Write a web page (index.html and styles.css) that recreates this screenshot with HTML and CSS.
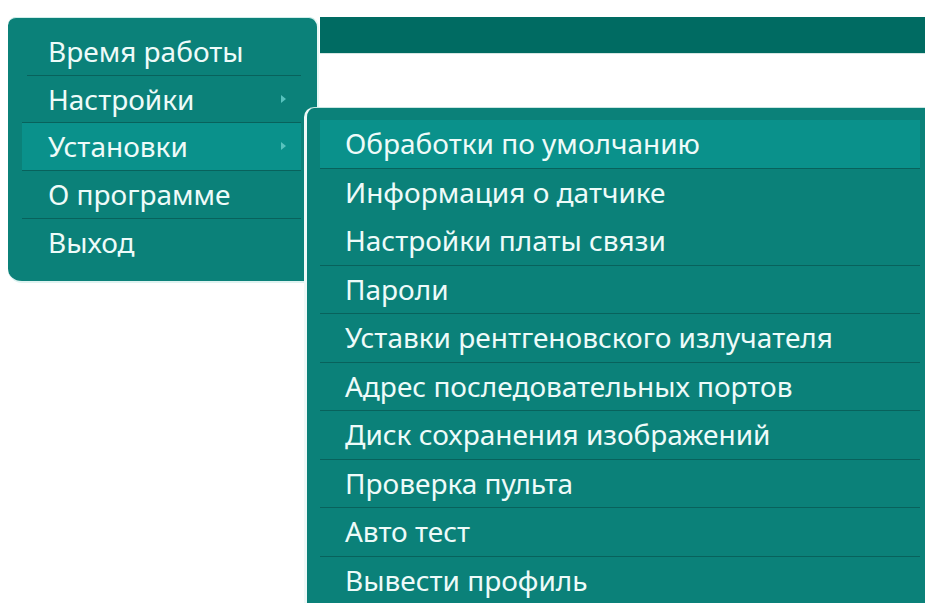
FILE: index.html
```html
<!DOCTYPE html>
<html lang="ru">
<head>
<meta charset="utf-8">
<title>Меню</title>
<link rel="stylesheet" href="styles.css">
</head>
<body>
<div class="screen">
  <div class="topbar"></div>

  <nav class="menu">
    <ul class="menu-list">
      <li class="item first">Время работы</li>
      <li class="item has-sub">Настройки<span class="arrow"></span></li>
      <li class="item has-sub active">Установки<span class="arrow"></span></li>
      <li class="item">О программе</li>
      <li class="item last">Выход</li>
    </ul>
  </nav>

  <nav class="submenu">
    <ul class="menu-list">
      <li class="item active">Обработки по умолчанию</li>
      <li class="item no-line">Информация о датчике</li>
      <li class="item">Настройки платы связи</li>
      <li class="item">Пароли</li>
      <li class="item">Уставки рентгеновского излучателя</li>
      <li class="item">Адрес последовательных портов</li>
      <li class="item">Диск сохранения изображений</li>
      <li class="item">Проверка пульта</li>
      <li class="item">Авто тест</li>
      <li class="item last">Вывести профиль</li>
    </ul>
  </nav>
</div>
</body>
</html>
```

FILE: styles.css
```css
html, body {
  margin: 0;
  padding: 0;
  background: #ffffff;
  overflow: hidden;
}

.screen {
  position: relative;
  width: 925px;
  height: 603px;
  padding-top: 17px;
  box-sizing: border-box;
  overflow: hidden;
  font-family: "Noto Sans", "Open Sans", sans-serif;
  color: #eefbf9;
}

/* dark application bar behind the menus */
.topbar {
  margin-left: 320px;
  height: 36px;
  background: #006b62;
  border-bottom: 1px solid #d5e6e3;
}

.menu-list {
  list-style: none;
  margin: 0;
  padding: 0;
}

.item {
  position: relative;
  height: 47.7px;
  line-height: 46px;
  font-size: 28px;
  padding-left: 26px;
  border-bottom: 1px solid #08625c;
  box-sizing: border-box;
  white-space: nowrap;
}

.item.active {
  background: #0a918b;
}

.item.last,
.item.no-line {
  border-bottom-color: transparent;
}

/* main popup menu */
.menu {
  position: absolute;
  left: 8px;
  top: 17px;
  width: 311px;
  height: 266px;
  background: #0b8179;
  border-top: 1px solid #cfeeea;
  border-right: 2px solid #e7f8f6;
  border-bottom: 2px solid #dff3f1;
  border-radius: 8px 10px 2px 14px;
  padding: 10px 16px 0 14px;
  box-sizing: border-box;
}

.menu .item.first {
  margin-left: 5px;
  padding-left: 21px;
}

.arrow {
  position: absolute;
  right: 15px;
  top: 19px;
  width: 0;
  height: 0;
  border-top: 4px solid transparent;
  border-bottom: 4px solid transparent;
  border-left: 5px solid #58c3be;
}

/* cascading submenu */
.submenu {
  position: absolute;
  left: 304px;
  top: 107px;
  right: 0;
  bottom: 0;
  background: #0b8179;
  border-top: 1px solid #c9e6e2;
  border-left: 3px solid #eef9f8;
  border-radius: 10px 0 0 0;
  padding: 12px 5px 0 13px;
  box-sizing: border-box;
  overflow: hidden;
}

.submenu .item {
  height: 48.5px;
  line-height: 47px;
  padding-left: 25px;
}

.submenu .item.last {
  height: 46px;
  line-height: 46px;
}
```
